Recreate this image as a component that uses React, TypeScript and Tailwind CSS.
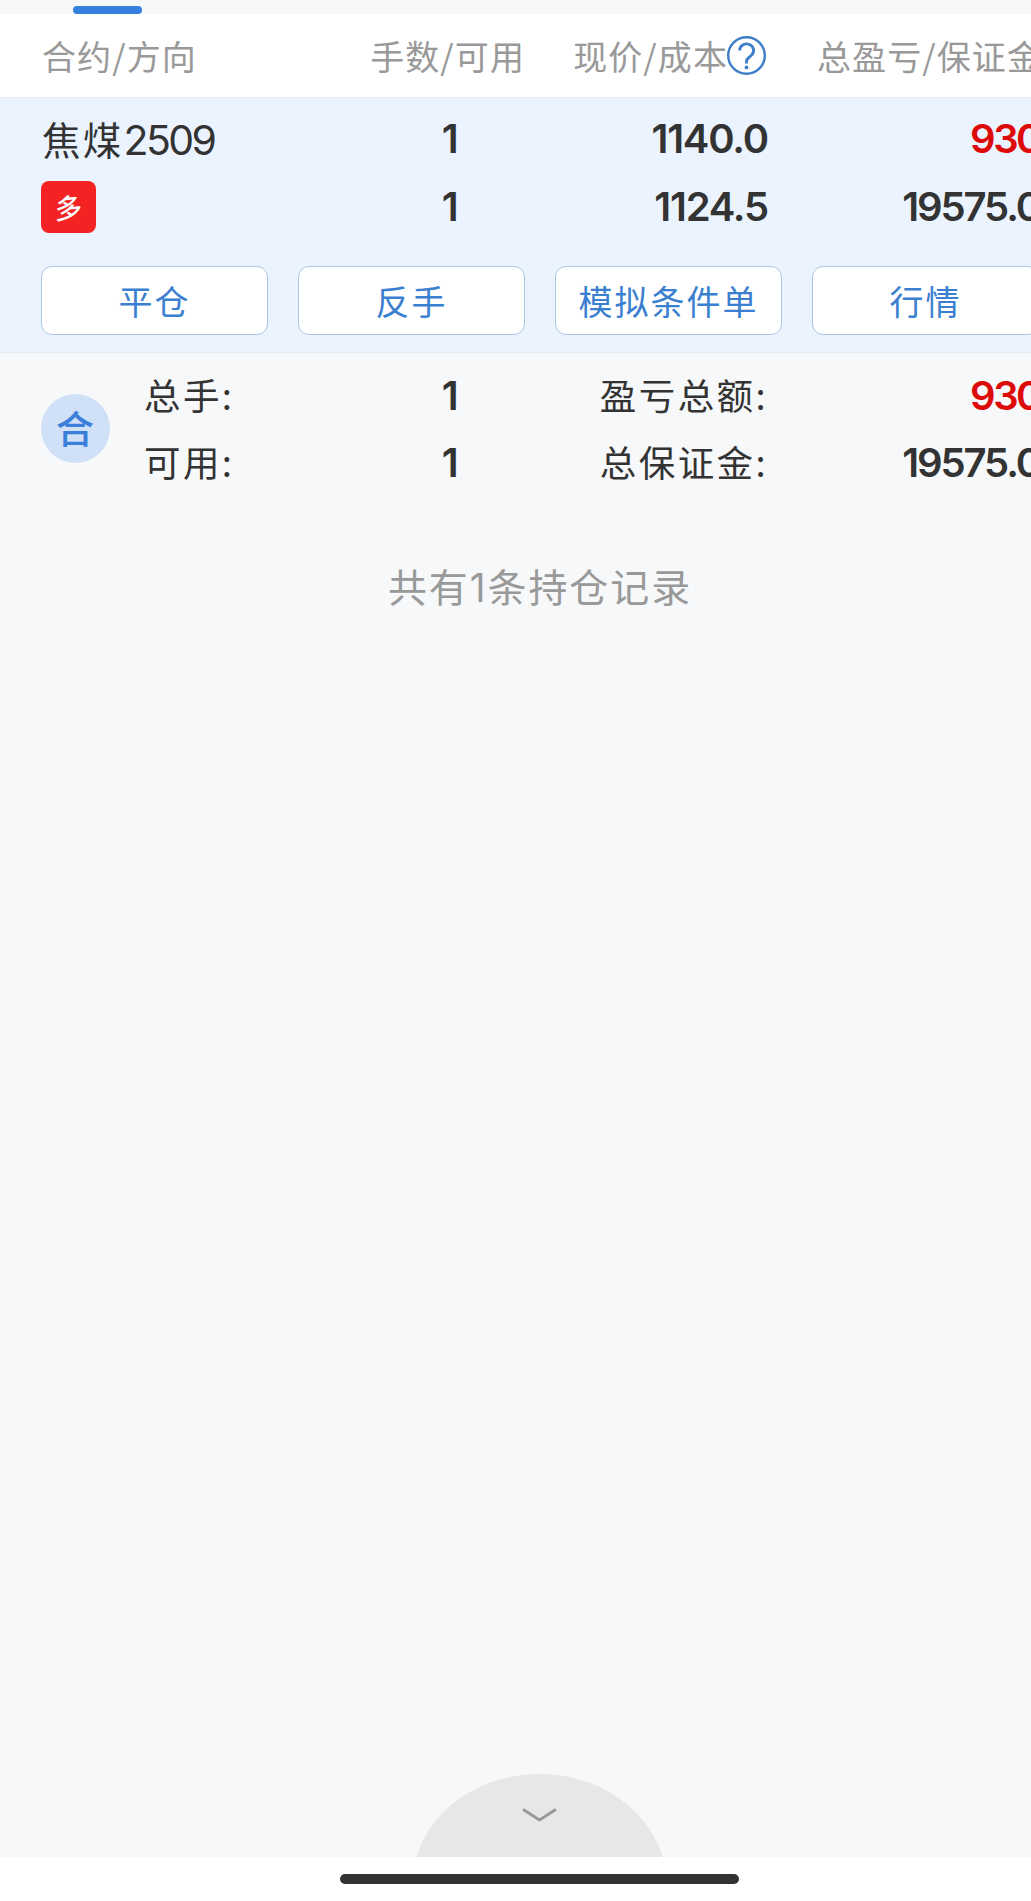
import type { ReactNode } from "react";

const CJK = "font-['Noto_Sans_CJK_SC',sans-serif]";
const NUM = "font-['Inter','Noto_Sans_CJK_SC',sans-serif]";

function Num({ children, className = "tracking-[-1.7px]" }: { children: ReactNode; className?: string }) {
  return (
    <span
      className={`${NUM} block whitespace-nowrap text-right text-[40px] font-semibold leading-[50px] ${className}`}
    >
      {children}
    </span>
  );
}

function HelpIcon() {
  return (
    <svg width="39" height="39" viewBox="0 0 39 39" fill="none" className="-ml-px shrink-0">
      <circle cx="19.5" cy="19.5" r="18.3" stroke="#3f7fc9" strokeWidth="2.4" />
      <path
        d="M12.6 14.6a7 6.6 0 1 1 11.6 4.9c-2.5 2.2-4.7 3.4-4.7 6.1v2"
        stroke="#3f7fc9"
        strokeWidth="2.9"
      />
      <circle cx="19.5" cy="31.4" r="1.9" fill="#3f7fc9" />
    </svg>
  );
}

function Header() {
  return (
    <div className="grid h-[84px] grid-cols-[227px_227px_227px_227px] items-center gap-[30px] border-b border-[#e6ecf2] bg-white px-[41px] text-[34px] leading-[50px] tracking-[1.1px] text-[#999999]">
      <span className="whitespace-nowrap pl-px">合约/方向</span>
      <span className="flex justify-end whitespace-nowrap">手数/可用</span>
      <span className="flex items-center justify-end whitespace-nowrap pr-[16px]">
        现价/成本
        <HelpIcon />
      </span>
      <span className="whitespace-nowrap pl-[5px]">总盈亏/保证金</span>
    </div>
  );
}

const actions = ["平仓", "反手", "模拟条件单", "行情"];

function Position() {
  return (
    <div className="h-[255px] border-b border-[#e6ebf4] bg-[#ebf3ff] px-[41px] pt-[15px] text-[#333333]">
      <div className="grid h-[52px] grid-cols-[227px_227px_227px_227px] gap-x-[30px]">
        <div className="flex h-[52px] items-start whitespace-nowrap pl-px text-[38.5px] leading-[50px] tracking-[2.3px]">
          焦煤<span className={`${NUM} pt-[2px] text-[41px] tracking-[-2.6px]`}>2509</span>
        </div>
        <Num className="pr-[68px] pt-px tracking-[-1.7px]">1</Num>
        <Num className="pr-[14px] pt-px tracking-[-1.2px]">1140.0</Num>
        <Num className="-mr-px pt-px tracking-[-2.5px] text-[#dd0a0a]">930</Num>
      </div>
      <div className="mt-[16px] grid h-[52px] grid-cols-[227px_227px_227px_227px] gap-x-[30px]">
        <div className="flex h-[52px] w-[55px] items-center justify-center rounded-[8px] bg-[#f42222] pb-px pr-px text-[27px] font-medium leading-none text-white">
          <span className="-skew-y-6">多</span>
        </div>
        <Num className="pr-[68px] pt-px tracking-[-1.7px]">1</Num>
        <Num className="pr-[14px] pt-px tracking-[-1.2px]">1124.5</Num>
        <Num className="-mr-px pt-px tracking-[-2.1px]">19575.0</Num>
      </div>
      <div className="mt-[33px] grid grid-cols-[227px_227px_227px_227px] gap-x-[30px]">
        {actions.map((a) => (
          <button
            key={a}
            className="flex h-[69px] items-center justify-center whitespace-nowrap rounded-[11px] border border-[#a9c8e0] bg-white text-[34px] leading-[50px] tracking-[2px] text-[#3b7fd0]"
          >
            {a}
          </button>
        ))}
      </div>
    </div>
  );
}

function SummaryRow({ a, av, b, bv, red }: { a: string; av: string; b: string; bv: string; red?: boolean }) {
  return (
    <div className="grid h-[48px] grid-cols-[124px_227px_227px_227px] gap-x-[30px] text-[36.5px] leading-[48px] tracking-[2.4px]">
      <span className="whitespace-nowrap">{a}</span>
      <Num className="pr-[68px] tracking-[-1.7px]">{av}</Num>
      <span className="flex justify-end whitespace-nowrap pr-[14px]">{b}</span>
      <Num className={red ? "-mr-px tracking-[-2.5px] text-[#dd0a0a]" : "-mr-px tracking-[-2.1px]"}>{bv}</Num>
    </div>
  );
}

function Summary() {
  return (
    <div className="flex items-start px-[41px] pt-[18px] text-[#333333]">
      <div className="mt-[23px] flex h-[69px] w-[69px] shrink-0 items-center justify-center rounded-full bg-[#d0e0f6] pb-[4px] pr-px text-[38px] font-medium leading-none text-[#3b7fdb]">
        合
      </div>
      <div className="ml-[34px] flex flex-col gap-[19px]">
        <SummaryRow a="总手:" av="1" b="盈亏总额:" bv="930" red />
        <SummaryRow a="可用:" av="1" b="总保证金:" bv="19575.0" />
      </div>
    </div>
  );
}

export default function App() {
  return (
    <div className="h-[1901px] w-full overflow-hidden bg-[#f7f8fa]">
      <div className={`${CJK} flex h-[1901px] w-[1080px] flex-col`}>
        <div className="flex h-[14px] items-end bg-[#f5f7f9] pl-[73px]">
          <div className="h-[8px] w-[69px] rounded-[4px] bg-[#3580df]" />
        </div>
        <Header />
        <Position />
        <Summary />
        <p className="mt-[71px] whitespace-nowrap text-center text-[39px] leading-[56px] tracking-[1.9px] text-[#999999]">
          共有<span className={NUM}>1</span>条持仓记录
        </p>
        <div className="mt-auto flex h-[83px] justify-center">
          <svg width="260" height="83" viewBox="0 0 260 83" fill="none">
            <ellipse cx="129.5" cy="110" rx="127" ry="110" fill="#e6e7e9" />
            <path
              d="M114 36l15.5 10L145 36"
              stroke="#999999"
              strokeWidth="2.8"
              strokeLinecap="round"
              strokeLinejoin="round"
            />
          </svg>
        </div>
        <div className="flex h-[44px] justify-center bg-white pr-px pt-[17px]">
          <div className="h-[10px] w-[399px] rounded-full bg-[#333333]" />
        </div>
      </div>
    </div>
  );
}
